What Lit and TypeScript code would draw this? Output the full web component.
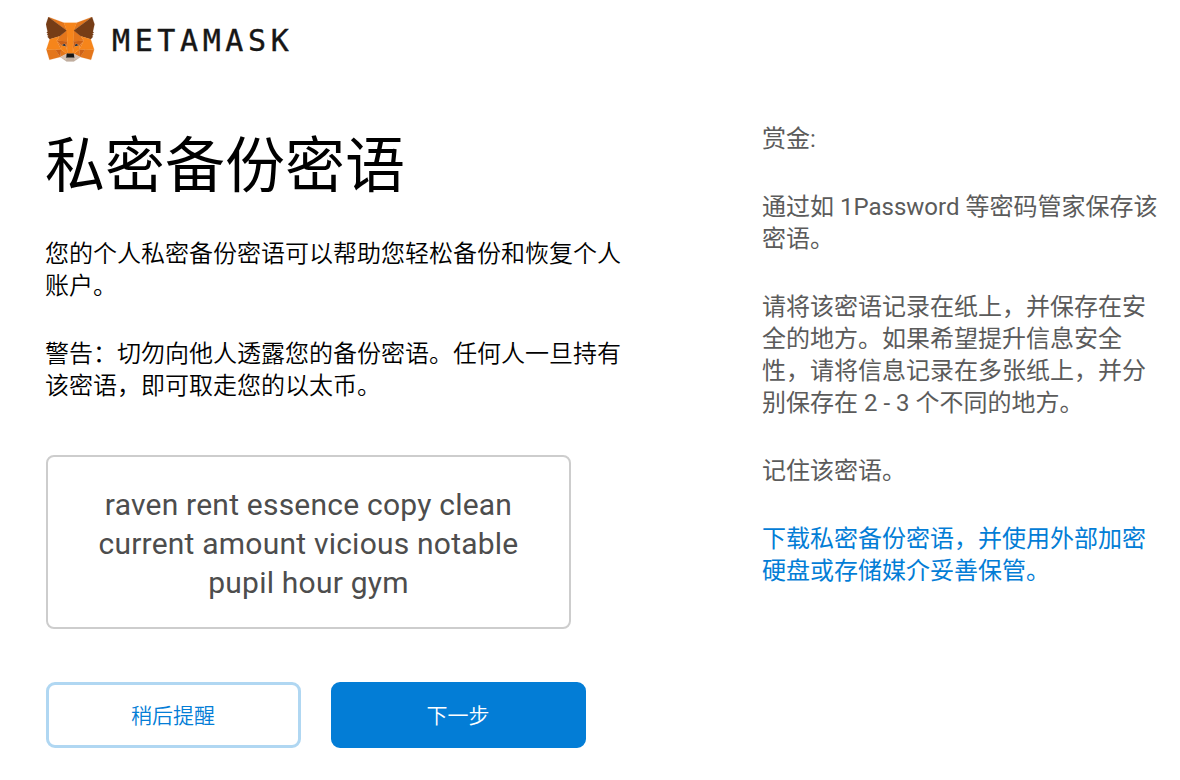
import { LitElement, html, css, svg } from "lit";
import { customElement } from "lit/decorators.js";

const FOX: [string, string[]][] = [
  ["#e2761b", ["274.1,35.5 174.6,109.4 193,65.8"]],
  ["#e4761b", [
    "44.4,35.5 143.1,110.1 125.6,65.8",
    "238.3,206.8 211.8,247.4 268.5,263 284.8,207.7",
    "33.9,207.7 50.1,263 106.8,247.4 80.3,206.8",
    "103.6,138.2 87.8,162.1 144.1,164.6 142.1,104.1",
    "214.9,138.2 175.9,103.4 174.6,164.6 230.8,162.1",
    "106.8,247.4 140.6,230.9 111.4,208.1",
    "177.9,230.9 211.8,247.4 207.1,208.1",
  ]],
  ["#d7c1b3", [
    "211.8,247.4 177.9,230.9 180.6,253 180.3,262.3",
    "106.8,247.4 138.3,262.3 138.1,253 140.6,230.9",
  ]],
  ["#233447", ["138.8,193.5 110.6,185.2 130.5,176.1", "179.7,193.5 188,176.1 208,185.2"]],
  ["#cd6116", [
    "106.8,247.4 111.6,206.8 80.3,207.7",
    "207,206.8 211.8,247.4 238.3,207.7",
    "230.8,162.1 174.6,164.6 179.8,193.5 188.1,176.1 208.1,185.2",
    "110.6,185.2 130.6,176.1 138.8,193.5 144.1,164.6 87.8,162.1",
  ]],
  ["#e4751f", [
    "87.8,162.1 111.4,208.1 110.6,185.2",
    "208.1,185.2 207.1,208.1 230.8,162.1",
    "144.1,164.6 138.8,193.5 145.4,227.6 146.9,182.7",
    "174.6,164.6 171.9,182.6 173.1,227.6 179.8,193.5",
  ]],
  ["#f6851b", [
    "179.8,193.5 173.1,227.6 177.9,230.9 207.1,208.1 208.1,185.2",
    "110.6,185.2 111.4,208.1 140.6,230.9 145.4,227.6 138.8,193.5",
  ]],
  ["#c0ad9e", [
    "180.3,262.3 180.6,253 178.1,250.8 140.4,250.8 138.1,253 138.3,262.3 106.8,247.4 117.8,256.4 140.1,271.9 178.4,271.9 200.8,256.4 211.8,247.4",
  ]],
  ["#161616", ["177.9,230.9 173.1,227.6 145.4,227.6 140.6,230.9 138.1,253 140.4,250.8 178.1,250.8 180.6,253"]],
  ["#763d16", [
    "278.3,114.2 286.8,73.4 274.1,35.5 177.9,106.9 214.9,138.2 267.2,153.5 278.8,140 273.8,136.4 281.8,129.1 275.6,124.3 283.6,118.2",
    "31.8,73.4 40.3,114.2 34.9,118.2 42.9,124.3 36.8,129.1 44.8,136.4 39.8,140 51.3,153.5 103.6,138.2 140.6,106.9 44.4,35.5",
  ]],
  ["#f6851b", [
    "267.2,153.5 214.9,138.2 230.8,162.1 207.1,208.1 238.3,207.7 284.8,207.7",
    "103.6,138.2 51.3,153.5 33.9,207.7 80.3,207.7 111.4,208.1 87.8,162.1",
    "174.6,164.6 177.9,106.9 193.1,65.8 125.6,65.8 140.6,106.9 144.1,164.6 145.3,182.8 145.4,227.6 173.1,227.6 173.3,182.8",
  ]],
];

@customElement("app-root")
export class AppRoot extends LitElement {
  static styles = css`
    :host {
      display: block;
      box-sizing: border-box;
      width: 1180px;
      height: 780px;
      overflow: hidden;
      padding: 17px 0 0 46px;
      background: #fff;
      color: #000;
      font-family: Roboto, "Noto Sans CJK SC", sans-serif;
      font-size: 24px;
      line-height: 32px;
    }
    .logo { display: flex; align-items: center; height: 45px; }
    .fox { width: 48.5px; height: 44.5px; display: block; }
    .word {
      margin-left: 17.5px;
      padding-top: 2px;
      font: 30px/46px "DejaVu Sans Mono", monospace;
      letter-spacing: 4.6px;
      color: #161616;
      -webkit-text-stroke: 0.4px #161616;
    }
    .cols { display: flex; justify-content: space-between; }
    .main { width: 580px; padding-top: 66px; }
    h1 { margin: 0 0 0 -1px; font-size: 60px; line-height: 78px; font-weight: 400; }
    p { margin: 0; }
    .main p { margin: 36px 0 0 -1px; font-weight: 350; }
    .main h1 + p { margin-top: 32px; }
    .seed {
      box-sizing: border-box;
      width: 525px;
      height: 174px;
      margin-top: 53px;
      padding: 28px 40px 0;
      border: 2px solid #cdcdcd;
      border-radius: 8px;
      color: #4d4d4d;
      font-size: 30px;
      line-height: 39px;
      letter-spacing: 0.22px;
      text-align: center;
    }
    .seed div { white-space: nowrap; }
    .actions { display: flex; gap: 30px; margin-top: 53px; }
    button {
      box-sizing: border-box;
      width: 255px;
      height: 66px;
      padding: 2px 1px 0 0;
      border: 3px solid #b0d7f2;
      border-radius: 9px;
      background: #fff;
      color: #037dd6;
      font: 350 21px/30px Roboto, "Noto Sans CJK SC", sans-serif;
    }
    .next { background: #037dd6; border-color: #037dd6; color: #fff; }
    .tips {
      display: flex;
      flex-direction: column;
      gap: 36px;
      width: 418px;
      padding-top: 61px;
      color: #5b5b5b;
    }
    .tips div { white-space: nowrap; }
    .link { color: #037dd6; }
  `;

  private lines(items: string[]) {
    return items.map((t) => html`<div>${t}</div>`);
  }

  render() {
    return html`
      <header class="logo">
        <svg class="fox" viewBox="31.8 35.5 255 236.4" preserveAspectRatio="none">
          ${FOX.map(([fill, shapes]) =>
            shapes.map((p) => svg`<polygon points=${p} fill=${fill} stroke=${fill} stroke-linejoin="round"></polygon>`)
          )}
        </svg>
        <span class="word">METAMASK</span>
      </header>
      <div class="cols">
        <main class="main">
          <h1>私密备份密语</h1>
          <p>${this.lines(["您的个人私密备份密语可以帮助您轻松备份和恢复个人", "账户。"])}</p>
          <p>${this.lines(["警告：切勿向他人透露您的备份密语。任何人一旦持有", "该密语，即可取走您的以太币。"])}</p>
          <section class="seed">
            ${this.lines(["raven rent essence copy clean", "current amount vicious notable", "pupil hour gym"])}
          </section>
          <div class="actions">
            <button>稍后提醒</button>
            <button class="next">下一步</button>
          </div>
        </main>
        <aside class="tips">
          <p>赏金:</p>
          <p>${this.lines(["通过如 1Password 等密码管家保存该", "密语。"])}</p>
          <p>${this.lines(["请将该密语记录在纸上，并保存在安", "全的地方。如果希望提升信息安全", "性，请将信息记录在多张纸上，并分", "别保存在 2 - 3 个不同的地方。"])}</p>
          <p>记住该密语。</p>
          <p class="link">${this.lines(["下载私密备份密语，并使用外部加密", "硬盘或存储媒介妥善保管。"])}</p>
        </aside>
      </div>
    `;
  }
}
